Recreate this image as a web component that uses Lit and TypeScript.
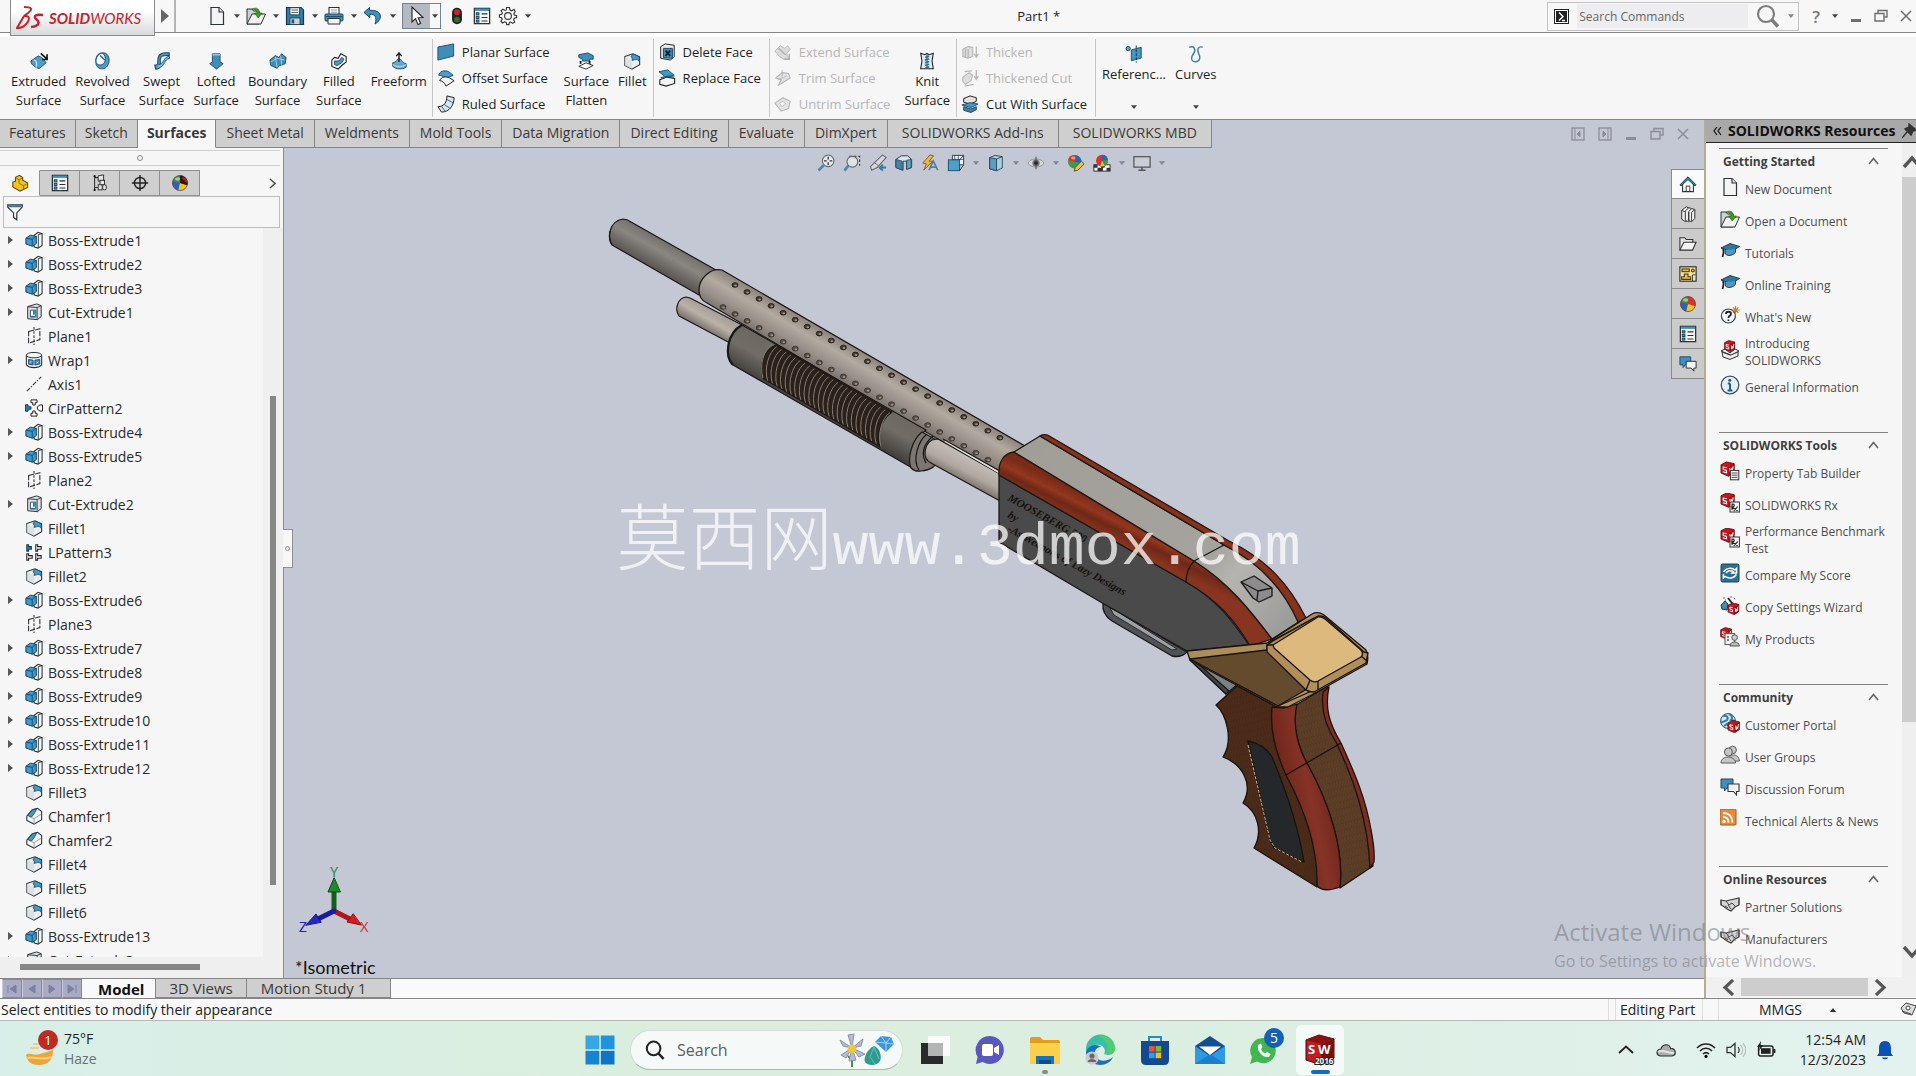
import { LitElement, html, svg, css, nothing } from "lit";
import { customElement, state } from "lit/decorators.js";
import { classMap } from "lit/directives/class-map.js";

const K = "#2b3238";
const B = "#3f8db8";

const cube = (x: number, y: number, s: number) => svg`
  <g transform="translate(${x} ${y}) scale(${s})">
    <path d="M0 2.5 L5 0 L12 1.5 L12 9.5 L7 13 L0 10 Z" fill="#c5161d" stroke="#5d0b0e" stroke-width=".8"/>
    <path d="M7 4.6 L12 1.5 V9.5 L7 13 Z" fill="#8c1115"/>
    <path d="M5.4 5.2 L2 4.6 L2 6.6 L5 7.6 L5 9.8 L1.6 8.8 M8 5.6 L8.7 10 L9.5 6.6 L10.2 8.8 L11 4" fill="none" stroke="#fff" stroke-width="1"/>
  </g>`;

const ball = svg`
  <circle cx="10" cy="10" r="8.4" fill="#d8342c"/>
  <path d="M10 10 L10 1.6 A8.4 8.4 0 0 0 1.8 8.4 Z" fill="#3c8f3e"/>
  <path d="M10 10 L1.8 8.4 A8.4 8.4 0 0 0 8 18.2 Z" fill="#2c62b8"/>
  <path d="M10 10 L8 18.2 A8.4 8.4 0 0 0 18 12.6 Z" fill="#f0c526"/>
  <circle cx="10" cy="10" r="8.4" fill="none" stroke="#4a4a4a" stroke-width=".8"/>
  <ellipse cx="7.4" cy="5.6" rx="3" ry="2" fill="#fff" opacity=".5"/>`;

const page = svg`<path d="M4 1.5 H12 L16.5 6 V18.5 H4 Z" fill="#f4f4f4" stroke="${K}" stroke-width="1.2"/><path d="M12 1.5 V6 H16.5" fill="#ddd" stroke="${K}" stroke-width="1.1"/>`;
const openDoc = svg`<path d="M1 3 H6 L7.5 5 H13 V18 H1 Z" fill="#cfd2d2" stroke="${K}"/><path d="M1 18 L6 8 H19.5 L15 18 Z" fill="#f1f1f1" stroke="${K}"/><path d="M6 3 C10 1 13.5 2.5 13.4 7 H16.3 L12.2 12 L8.6 7 H11 C10.8 4.6 9 3.6 6 3 Z" fill="#3f9a1f" stroke="#1f5c10" stroke-width=".6"/>`;
const cap = svg`<path d="M1 7 L10 2.5 L19.5 5.5 L11.5 10.5 Z" fill="#2f77a3" stroke="#1d3f57"/><path d="M5 9 L5.4 13 C8 15.4 12 15 15.5 11.4 L15.4 8" fill="#4d97c2" stroke="#1d3f57"/><path d="M3 8 C4.5 11 3 13 2.5 16" fill="none" stroke="#222" stroke-width="1.8"/>`;
const list = svg`<rect x="1.5" y="1.5" width="17" height="17" fill="#f6f6f6" stroke="${K}" stroke-width="1.4"/><path d="M2 3 H18" stroke="${B}" stroke-width="2.6"/><g fill="#4f9ac4" stroke="#173d57"><rect x="3.6" y="6.4" width="3" height="2.4"/><rect x="3.6" y="10.4" width="3" height="2.4"/><rect x="3.6" y="14.4" width="3" height="2.4"/></g><path d="M9.5 7.6 H16 M9.5 11.6 H16 M9.5 15.6 H16" stroke="${K}" stroke-width="1.2"/>`;
const chat = svg`<path d="M1 2 H13 V11 H7 L4.5 14 V11 H1 Z" fill="#3e8fc0" stroke="#1d4968"/><path d="M8 7 H19 V14.5 H16.5 V18 L13.5 14.5 H8 Z" fill="#f3f3f3" stroke="#333" stroke-width="1.1"/>`;
const shake = svg`<path d="M1 5 L6 6 L10 5 L19 3 V10 L15 12 L11 16 L7 14 L3 11 L1 10 Z" fill="#d4d4d4" stroke="#3b3b3b" stroke-width="1.1"/><path d="M6 6 L9 10 L12 8 L16 12 M5 11 L8 13 M8 10 L11 14 M1 5 V10 M19 3 V10" fill="none" stroke="#444"/>`;
const fillet = svg`<path d="M2 5 L11 2 L18.5 5.5 V14 L10 19 L2 15 Z" fill="#eceded" stroke="${K}" stroke-width="1.2"/><path d="M2 5 L10 9.4 V19 L2 15 Z" fill="#d9dbdc" opacity=".7"/><path d="M9 5.4 C9.4 3.6 11 2.6 12.5 2.6 L18.2 5.4 V10.6 C16.5 7.6 14 8 10.2 9.4 C10.6 7.6 10 6.2 9 5.4 Z" fill="#3f9cc8" stroke="#1b4a66"/>`;

const ICONS: Record<string, unknown> = {
  page, openDoc, cap, list, chat, shake, fillet, ball,
  save: svg`<path d="M1.5 1.5 H16 L18.5 4 V18.5 H1.5 Z" fill="#2f7da8" stroke="#17394d" stroke-width="1.2"/><rect x="5" y="1.8" width="9.5" height="7" fill="#fff" stroke="#17394d" stroke-width=".8"/><path d="M6.5 4 H13 M6.5 6.4 H13" stroke="#555"/><rect x="5" y="12" width="10" height="6.4" fill="#c9d2d8" stroke="#17394d" stroke-width=".8"/><rect x="6.6" y="13.4" width="2.6" height="4" fill="#23556f"/>`,
  print: svg`<path d="M5 8 V1.5 H15 V8" fill="#fff" stroke="${K}" stroke-width="1.1"/><path d="M7 4 H13 M7 6.2 H13" stroke="#999"/><rect x="1" y="8" width="18" height="7" rx="1" fill="#3f93bf" stroke="#1c4660"/><path d="M4 12.5 H16 V18 H4 Z" fill="#f5f5f5" stroke="${K}"/><path d="M1.5 10.6 H18.5" stroke="#1c4660"/>`,
  undo: svg`<path d="M6.5 1.5 L1 6.5 L6.8 11.5 V8.4 C11.5 7.6 14.5 10.5 12 18 C20.6 13 19 3.4 6.6 4.4 Z" fill="#3c90bd" stroke="#1c4660"/>`,
  cursor: svg`<path d="M5 1 L5 16 L8.6 12.6 L11 18.6 L13.6 17.5 L11.2 11.8 L16 11.6 Z" fill="#fdfdfd" stroke="#222" stroke-width="1.1"/>`,
  light: svg`<rect x="4.5" y=".8" width="11" height="18.4" rx="5.5" fill="#23211f"/><circle cx="10" cy="5.8" r="3.3" fill="#c3272b"/><circle cx="10" cy="14" r="3.3" fill="#2f6e2f"/>`,
  gear: svg`<path d="M8.6 1.5 H11.4 L12 4 L13.8 4.8 L16 3.4 L17.2 5.8 L15.8 7.8 L16.3 9 L18.6 9.6 V11.6 L16.3 12.2 L15.6 13.8 L16.8 16 L14.8 17.4 L12.8 16 L11.4 16.5 L11 18.6 H8.8 L8.2 16.4 L6.6 15.8 L4.6 17 L2.9 15.2 L4.2 13.2 L3.6 11.8 L1.4 11.2 V9 L3.7 8.4 L4.4 6.8 L3 4.8 L4.9 3.2 L7 4.4 L8.2 3.9 Z" fill="#f7f7f7" stroke="#333" stroke-width="1.1"/><circle cx="10" cy="10" r="3.4" fill="none" stroke="#333" stroke-width="1.1"/>`,
  extrude: svg`<path d="M1 10 L9 4.5 L13 6 L18 12 L10 18.5 L6.5 17 L1.5 13 Z" fill="#4d9fca" stroke="#1b4a66"/><path d="M4 9 C7 9 8 12 7 17" fill="none" stroke="#bfe0f0" stroke-width="1.6"/><path d="M12 1.5 L19 8 M19 2.5 V8.4 H13.5" stroke="#111" stroke-width="1.8" fill="none"/>`,
  revolve: svg`<path d="M10 1 C16 0 19 6 17.6 12 C16 17.6 12 19.6 8 18.4 C4 17 3 14 3.4 12 C6 16 12 15 13.4 10 C14.4 6 13 2.6 10 1 Z" fill="#4b9cc8" stroke="#1b4a66"/><path d="M10 1 C4 2 2.4 8 3.4 12 M8 4 L13 9" fill="none" stroke="#27607f" stroke-width="1.5"/>`,
  sweep: svg`<path d="M3 19 C10 19 8 12 8 9 C8 3 13 4 18 4 V1 C10 0 6 2 5.5 8 C5 12 6 15 2 14.5 Z" fill="#4b9cc8" stroke="#1b4a66" stroke-width="1.2"/><path d="M6 14 C12 14 12 5 18 4.6 L18.4 7 C12 8 14 16 5 18.6" fill="#78b9da" stroke="#1b4a66"/>`,
  loft: svg`<path d="M6 2 H14.5 V11 L18 13 L10.5 19 L3 13 L6 11 Z" fill="#3f8db8" stroke="#1b4a66"/><path d="M6 2 H14.5 V4 H6 Z" fill="#8cc3de"/>`,
  boundary: svg`<path d="M1 9 L7 4 L11 6 L14 2 L19 6 L18 13 L12 15 L9 18 L2 15 Z" fill="#3f8db8" stroke="#1b4a66"/><path d="M2 11 L9 7 L17 9 M7 5 L9 17 M13 4 L14 14" stroke="#a9d3e8" fill="none"/>`,
  filled: svg`<path d="M2 9 L5 6 L9 7 L12 2 L18 5 V11 L13 15 L9 19 L2 16 Z" fill="#f4f4f4" stroke="#222" stroke-width="1.2"/><path d="M5 10 L10 10 L13 6 L15.5 8 L13 12 L8 15 L5 14 Z" fill="#4b9cc8" stroke="#1b4a66"/>`,
  freeform: svg`<path d="M3 12 C7 12 8 7 10 7 C12 7 13 12 18 13 V17 C12 20 7 19 3 16 Z" fill="#62aad0" stroke="#1b4a66"/><path d="M3 14 C8 17.5 13 17 18 14" stroke="#d7ecf6" fill="none"/><path d="M10 11 V2 M7 4.6 L10 1 L13 4.6" stroke="#222" fill="none" stroke-width="1.6"/>`,
  planar: svg`<path d="M1 4.5 L18.5 1 V14.5 L1 19 Z" fill="#3f8db8" stroke="#1b4a66"/>`,
  offset: svg`<path d="M2 7 C3 2 8 1 13 3 L18 7 L8 11 C7 8 5 7 2 7 Z" fill="#4b9cc8" stroke="#1b4a66"/><path d="M3 13 C5 8 10 8 14 10 L19 13 L10 19 C8 15 6 13 3 13 Z" fill="#f2f2f2" stroke="#222" stroke-width="1.1"/>`,
  ruled: svg`<path d="M1 13 C8 13 11 8 11 1 L19 3 C19 11 14 19 5 19 Z" fill="#d9e6ed" stroke="#222" stroke-width="1.1"/><path d="M11 5 L18.6 9 M8 10.6 L15 15 M5 12.5 L9 18" stroke="#27607f"/>`,
  flatten: svg`<path d="M2 3 L12 1 L18 4 V8 L14 8 V10 H6 V8 L2 6 Z" fill="#3f8db8" stroke="#1b4a66"/><path d="M4 10 V13 M14 10 V13" stroke="#111" stroke-width="2"/><path d="M2 16 L10 12 L18 15 L10 19 Z" fill="#fff" stroke="#222"/>`,
  delFace: svg`<path d="M3 4 L8 1 L18 2.5 V15 L14 19 L3 17 Z" fill="#e9ebec" stroke="#222" stroke-width="1.1"/><path d="M6 6 L16 6 V17 L6 16.4 Z" fill="#3f8db8" stroke="#173d57"/><path d="M8.4 8.4 L13.6 14.4 M13.6 8.4 L8.4 14.4" stroke="#0b1e2a" stroke-width="2"/>`,
  repFace: svg`<path d="M1 3 L11 1 L18 7 L8 8.6 Z" fill="#3f9ac6" stroke="#1b4a66"/><path d="M2 12 L10 9 L18.5 10.5 V16 L9 19 L2 17 Z" fill="#f4f4f4" stroke="#222" stroke-width="1.2"/><path d="M3 10 L10 8 L18 9" stroke="#27607f" fill="none" stroke-width="1.6"/>`,
  extSurf: svg`<path d="M1 9 L7 3 L12 6 L15 3 L18 7 L14 12 L17 18 H11 L6 15 Z" fill="#dcdcdc" stroke="#b6b6b6"/><path d="M5 6 L13 13 M17 12 V18 H11" stroke="#b0b0b0" stroke-width="1.6" fill="none"/>`,
  trimSurf: svg`<path d="M2 10 L9 4 L16 5 L18 10 L10 15 L5 18 L8 12 Z" fill="#e2e2e2" stroke="#b4b4b4" stroke-width="1.2"/><path d="M9 1 V8 M4 12 L14 8" stroke="#b4b4b4"/>`,
  untrim: svg`<path d="M1 9 L10 3 L18 7 L16 15 L8 18 Z" fill="#e4e4e4" stroke="#b6b6b6" stroke-width="1.2"/><path d="M6 9 L10 7 L13 10 L9 13 Z" fill="#f5f5f5" stroke="#bbb"/>`,
  knit: svg`<path d="M3 1.5 L7.6 3 L10 1.5 L12.4 3 L17 1.5 L15.6 10 L17 18.6 H3 L4.4 10 Z" fill="#dfeaf1" stroke="#222" stroke-width="1.2"/><path d="M10 2 V18" stroke="#173d57"/><path d="M8 6 L12.4 4.6 M7.6 9 L12.4 7.6 M7.6 12 L12.4 10.6 M7.6 15 L12.4 13.6 M8 18 L12.4 16.4" stroke="#2b6f97" stroke-width="1.8"/>`,
  thicken: svg`<path d="M2 7 L8 4 L13 5 V15 L8 17 L2 15 Z" fill="#ddd" stroke="#b6b6b6" stroke-width="1.2"/><path d="M5 6 V16 M8 7 V17 M17 4 V15 M14.6 12 L17 15.6 L19.4 12" stroke="#b6b6b6" fill="none" stroke-width="1.4"/>`,
  thickCut: svg`<path d="M2 9 L9 4 L13 7 L11 13 L5 17 L2 14 Z" fill="#ddd" stroke="#b6b6b6" stroke-width="1.2"/><path d="M4 3 L12 2 M17 1 V11 M14.6 8 L17 11.6 L19.4 8 M4 19 L14 17" stroke="#b6b6b6" fill="none" stroke-width="1.4"/>`,
  cutWith: svg`<path d="M3 4 L10 1 L17 3 V7 L10 10 L3 8 Z" fill="#e9e2d5" stroke="#222" stroke-width="1.1"/><path d="M1 11 L10 8.5 L19 10 L11 14 Z" fill="#3f9ac6" stroke="#1b4a66"/><path d="M3 13 L11 15.6 L17 13 V16.4 L11 19.4 L3 17 Z" fill="#3b86ae" stroke="#153b52"/>`,
  refGeo: svg`<circle cx="3.5" cy="4" r="2.4" fill="#58a6cf" stroke="#1b3b4f"/><path d="M7 5.5 L18 2.5 V14.5 L7 17.5 Z" fill="#4696c2" stroke="#1b4a66"/><path d="M12.5 .5 V19.5" stroke="#102a3a" stroke-dasharray="3 1.4"/>`,
  curves: svg`<path d="M2.5 2.5 C9 .5 10 6 7 10 C3 16 6 19 10 18.6 C15 18 15 13 13 9.6 C11 5 12 1 17.5 2.4" fill="none" stroke="#3a7fa8" stroke-width="1.6"/>`,
  boss: svg`<path d="M10 5 L14.5 1.5 L19 3 V16 L14.5 19 L10 17.5 Z" fill="#f6f6f6" stroke="${K}" stroke-width="1.2"/><path d="M14.8 4 L19 3 M14.8 4 V18.6" stroke="${K}"/><path d="M1 8 L6 4.6 L12.6 6 V14 L8 17 L1 14.4 Z" fill="#3d9cc9" stroke="#174560" stroke-width="1.1"/><path d="M1 8 L8 9.2 L12.6 6 M8 9.2 V17" fill="none" stroke="#174560"/>`,
  cut: svg`<path d="M3 4 L13 1 L18 3 V15 L14 18.5 L3 17.5 Z" fill="#dfe1e2" stroke="${K}" stroke-width="1.1"/><path d="M3 4.2 L13.5 5 V18.4 M13.5 5 L18 3" fill="none" stroke="${K}"/><path d="M6 8 L12 8 V15.5 H6 Z" fill="#fff" stroke="#1b4a66"/><rect x="8.8" y="8.4" width="3" height="4.6" fill="#2f86b2"/><path d="M6 15 H12" stroke="#2f6f97" stroke-width="1.6"/>`,
  plane: svg`<path d="M4 5 L16.5 2 V14 L4 18 Z" fill="none" stroke="${K}" stroke-width="1.2" stroke-dasharray="6 1.6"/><path d="M10 0 V20" stroke="${K}" stroke-dasharray="3 1.6" stroke-width="1.2"/>`,
  wrap: svg`<path d="M1.5 5 V15.5 C5 19.5 15 19.5 18.5 15.5 V5" fill="#eef1f3" stroke="${K}" stroke-width="1.2"/><ellipse cx="10" cy="4.6" rx="8.5" ry="3" fill="#fafafa" stroke="${K}" stroke-width="1.1"/><path d="M4 9.4 L9 10.2 V15.6 L4 14.6 Z M11 10.2 L16.4 9.4 V14.4 L11 15.6 Z" fill="#3f8db8" stroke="#1a4a72"/><path d="M5 13 L7 11.6 M12.6 13.4 L15 12" stroke="#fff"/>`,
  axis: svg`<path d="M2 18 L18 2" stroke="${K}" stroke-width="1.2" stroke-dasharray="5 1.5 1.5 1.5"/>`,
  cir: svg`<g fill="#fafafa" stroke="#222" stroke-width="1.1"><path d="M6.6 1 H13.4 V4 H11.4 V6.6 H8.6 V4 H6.6 Z"/><path d="M6.6 19 H13.4 V16 H11.4 V13.4 H8.6 V16 H6.6 Z"/><path d="M19.4 6.6 V13.4 H16.8 L13.8 11.4 V8.6 L16.8 6.6 Z"/></g><path d="M.6 6.4 H3.4 V8.6 H6.6 V11.4 H3.4 V13.6 H.6 Z" fill="#2f86b2" stroke="#143b52" stroke-width="1.1"/>`,
  lpat: svg`<path d="M2 2 H4 V4 H7 V7 H4 V9 H2 Z" fill="#2f86b2" stroke="#143b52" stroke-width="1.2"/><g fill="#fafafa" stroke="#222" stroke-width="1.2"><path d="M12 2 H14 V4 H18 V7 H14 V9 H12 Z"/><path d="M2 12 H4 V14 H8 V17 H4 V19 H2 Z"/><path d="M12 12 H14 V14 H18 V17 H14 V19 H12 Z"/></g>`,
  chamfer: svg`<path d="M2 10 L8 3 L14 1.5 L18.5 5 V14 L10 19 L2 15 Z" fill="#f3f4f4" stroke="${K}" stroke-width="1.2"/><path d="M3 9.4 L8.6 3 L13 2 L10.4 7 L7 11.4 Z" fill="#4398c4" stroke="#1b4a66"/><path d="M7 11.4 L10 13 V19 M10 13 L18 8" fill="none" stroke="#999"/>`,
  part: svg`<path d="M2 9 L2 14.5 L10 19 L18.5 15 V10 L13 7 V4 L9.4 1.4 L5 3.6 V8 Z" fill="#f3c320" stroke="#5d4708" stroke-width="1.2"/><path d="M5 4 L9 6.4 V10.4 L14 13 L18.5 10.4 M14 13 V17 M9 6.4 L13 4.4" fill="none" stroke="#8b6a0d"/>`,
  config: svg`<path d="M4 2 V18 M4 4 H8 M4 15 H8" stroke="#333" stroke-width="1.2" fill="none"/><g fill="#e8e8e8" stroke="#333" stroke-width="1.1"><path d="M8 2 L14 1 V7 L8 8 Z"/><rect x="10" y="7" width="5" height="5"/><rect x="8" y="12" width="4.4" height="5.6"/><rect x="13" y="12" width="4" height="5.6" rx="1.6"/></g><circle cx="4" cy="2.4" r="1.2"/><circle cx="4" cy="17.8" r="1.2"/>`,
  target: svg`<circle cx="10" cy="10" r="6.2" fill="none" stroke="#222" stroke-width="1.6"/><path d="M10 1 V19 M1 10 H19" stroke="#222" stroke-width="1.6"/>`,
  ballDark: svg`${ball}<path d="M10 10 L10 1.6 A8.4 8.4 0 0 1 18 12.6 Z" fill="#251c1a"/><path d="M13 4 L18 9" stroke="#a9291f" stroke-width="2.4"/>`,
  funnel: svg`<path d="M2 2 H18 V4.6 L12 11 V18.6 L8.4 16 V11 L2 4.6 Z" fill="#f6f6f6" stroke="${K}" stroke-width="1.3"/><path d="M2 2.6 H18 L17 4.6 H3 Z" fill="#2f7da8"/>`,
  fit: svg`<circle cx="12.4" cy="7.6" r="6.4" fill="#e4eaee" stroke="#666" stroke-width="1.2"/><path d="M7.6 12.4 L1.6 18.4" stroke="#4f88a8" stroke-width="3"/><path d="M12.4 3 V6 M12.4 9.2 V12.2 M7.8 7.6 H10.8 M14 7.6 H17" stroke="#333" stroke-width="1.5"/>`,
  area: svg`<path d="M7 2.5 H18.5 V13" fill="none" stroke="#333" stroke-dasharray="3 2" stroke-width="1.2"/><circle cx="10.4" cy="8.6" r="6" fill="#dce3e8" stroke="#666" stroke-width="1.2"/><path d="M6 13 L1.6 18.4" stroke="#4f88a8" stroke-width="3"/>`,
  prev: svg`<path d="M15 1 L19 4 L9 15 L3 18 L1.6 14 Z" fill="#d6dadd" stroke="#666" stroke-width="1.2"/><path d="M6 9.6 L11 13.4" stroke="#666"/><path d="M19 15 H13 M15.4 12 L12 15.2 L15.4 18.4" stroke="#2f7da8" fill="none" stroke-width="2.2"/>`,
  section: svg`<path d="M1 6 L7 2 L14 2 L18.5 6 V15 L13 17 V8 L9 8 V18 L1 15 Z" fill="#d9e4ea" stroke="${K}"/><path d="M1 6 L8 8 V18 L1 15 Z" fill="#3f86ad" stroke="#2b4a5e"/><path d="M13 7 L18 6 V15 L13 17 Z" fill="#5aa6cd" stroke="#2b4a5e"/>`,
  dims: svg`<path d="M2 10 L10 1 L14 2 L9 8 L13 8 L3 18 L6 11 Z" fill="#efb64a" stroke="#7a5a1c"/><path d="M9 18 L13.6 7.6 L18.6 18 M11 14.6 H17" stroke="#4f7fa6" fill="none" stroke-width="1.8"/>`,
  cubeView: svg`<path d="M6 1.5 H18.5 V12 H6 Z" fill="#eef2f5" stroke="${K}"/><path d="M8.6 1.5 V12 M12.6 1.5 V12 M6 6 H18.5" stroke="${K}" stroke-width=".8"/><rect x="1.5" y="6.5" width="12.5" height="12" fill="#4c9fc9" stroke="#1a4a66"/><path d="M14 6.5 L18.5 1.5 M14 18.5 L18.5 12" stroke="${K}"/>`,
  display: svg`<path d="M3 4 L9 1.5 L17 3 V15.5 L10.6 18.6 L3 16.4 Z" fill="#a8cfe2" stroke="#2b4250"/><path d="M3 4 L10.6 5.6 V18.6 L3 16.4 Z" fill="#5a9fc3" stroke="#2b4250"/><path d="M10.6 5.6 L17 3" stroke="#2b4250"/>`,
  eye: svg`<path d="M1 10 C5 4 15 4 19 10 C15 16 5 16 1 10 Z" fill="#d5d8dc" stroke="#8b9096"/><circle cx="10" cy="10" r="4" fill="#6b6f74"/><circle cx="10" cy="10" r="2" fill="#111"/><path d="M10 3 V17" stroke="#444"/>`,
  editApp: svg`<circle cx="8.6" cy="8.6" r="7.6" fill="#3d9b48"/><path d="M8.6 8.6 V1 A7.6 7.6 0 0 1 16 10 Z" fill="#2c62b8"/><path d="M8.6 8.6 L1.2 7 A7.6 7.6 0 0 1 8.6 1 Z" fill="#d8342c"/><ellipse cx="7" cy="4.4" rx="2.6" ry="1.8" fill="#fff" opacity=".45"/><path d="M8 19 L9 15 L16 8 L19 11 L12 18 Z" fill="#efc04a" stroke="#5d4708"/>`,
  scene: svg`<rect x="1" y="12" width="18" height="7" fill="#fff" stroke="#222"/><path d="M1 12 H5 V15.4 H9 V12 H13 V15.4 H19 V19 H15 V15.4 H11 V19 H5 V15.4 H1 Z" fill="#333"/><circle cx="10" cy="7.4" r="6.6" fill="#d8342c"/><path d="M10 7.4 L16.4 6 A6.6 6.6 0 0 1 8 13.7 Z" fill="#3d9b48"/><path d="M10 7.4 V.8 A6.6 6.6 0 0 1 16.5 6.4 Z" fill="#2c62b8"/><path d="M10 7.4 L13 13 L8 13.8 Z" fill="#f0c526"/>`,
  monitor: svg`<rect x="1" y="3" width="18" height="11.6" fill="#c9ced6" stroke="#555" stroke-width="1.4"/><path d="M10 15 V18 M6 18 H14" stroke="#555" stroke-width="1.8"/>`,
  home: svg`<path d="M4 10 V18.5 H16 V10" fill="#fafafa" stroke="#333" stroke-width="1.2"/><path d="M1 11 L10 2 L19 11 L17.6 12 L10 5 L2.4 12 Z" fill="#2e8dab" stroke="#14343f"/><rect x="8" y="12.4" width="4" height="6" fill="none" stroke="#333"/>`,
  books: svg`<g fill="#efefef" stroke="#333" stroke-width="1.1"><path d="M3 6 L8 2 L10.4 3 V16 L7 18.6 L3 15.6 Z"/><path d="M7 6.6 L11 3 L14 4 V15.6 L10.6 18.6 L7 17 Z"/><path d="M11 7 L14 4 L17.6 5 V15 L14 18.6 L11 17.4 Z"/></g><path d="M14 8 V18 M14 8 L17.6 5 M10.6 8 V18 M3 6 L6.6 7.4" stroke="#333"/>`,
  folder: svg`<path d="M1 16.5 V3 H6.4 L8 5 H15.4 V8" fill="#e4e4e4" stroke="#333" stroke-width="1.2"/><path d="M1 16.8 L5.4 8 H19 L15 16.8 Z" fill="#f3f3f3" stroke="#333" stroke-width="1.2"/>`,
  palette: svg`<rect x="1" y="2" width="18" height="16" fill="#f3e2ac" stroke="#222" stroke-width="1.2"/><g fill="#f6c437" stroke="#4a3907" stroke-width="1.2"><rect x="3.4" y="4.4" width="8" height="3"/><path d="M6 10 H10 V13 H13 V16 H3 V13 H6 Z"/><circle cx="15.4" cy="6" r="1.6"/></g><path d="M15 18 V11 H19" fill="#e4e4ea" stroke="#333"/>`,
  whatsNew: svg`<circle cx="8.4" cy="11" r="7" fill="#f4f4f4" stroke="#345" stroke-width="1.2"/><path d="M6 9 C6 6 11 6 11 9 C11 11 8.4 10.6 8.4 13 M8.4 14.6 V16" stroke="#222" stroke-width="1.8" fill="none"/><path d="M15.6 1 V9 M11.6 5 H19.6 M13 2.4 L18.4 7.8 M18.4 2.4 L13 7.8" stroke="#c87a22" stroke-width="1.1"/>`,
  intro: svg`<path d="M2 12 L10 15 L18 12 V16 L10 19.4 L3 17 Z" fill="#eee" stroke="#333"/><path d="M1 11 L5 9 L10 13 L15 9 L19 11 L11 15 Z" fill="#fafafa" stroke="#333"/>${cube(4.4, 0.6, 0.86)}`,
  info: svg`<circle cx="10" cy="10" r="8.8" fill="#e4f0f8" stroke="#41525e" stroke-width="1.3"/><path d="M10 8.6 V15.4 M7.8 8.6 H10 M7.6 15.4 H12.4" stroke="#1f5d8c" stroke-width="2"/><circle cx="9.8" cy="5.2" r="1.5" fill="#1f5d8c"/>`,
  tab: svg`${cube(1, 1, 1.1)}<rect x="10.4" y="9.4" width="8.4" height="9.4" fill="#f1f3f5" stroke="#333"/><path d="M11.6 12 H17.6 M11.6 14.2 H17.6 M11.6 16.4 H17.6" stroke="#555"/>`,
  rx: svg`${cube(1, 0, 1.1)}<rect x="10" y="9" width="9.4" height="10" fill="#f5f5f5" stroke="#333"/><path d="M12 17 V11 C15 10.6 15 14 12 14 L17.6 17.8 M17.6 13.6 L13.8 17.8" stroke="#222" fill="none" stroke-width="1.1"/>`,
  score: svg`<rect x="1" y="1" width="18" height="18" rx="1.6" fill="#2d6f98" stroke="#1a4661"/><path d="M3.6 9 C6 4.6 12 4.4 15 7 L16.6 5.4 V10 H12 L13.4 8.6 C11 7 7.6 7.6 6 10 M16.4 11.4 C14 16 8 15.6 5 13.4 L3.4 14.8 V11" fill="none" stroke="#fff" stroke-width="1.5"/>`,
  wizard: svg`<path d="M1 10 L5 6 L8 9 L7 15 L2 14 Z" fill="#3f8db8" stroke="#1b3b4f"/><path d="M8 3 L15 12" stroke="#222" stroke-width="1.8"/><path d="M4 2 V4 M11 1 V3 M14 2.6 L15 4.4 M6 4.6 L4.6 5.8" stroke="#666"/>${cube(8, 8, 0.9)}`,
  products: svg`${cube(0.6, 0.6, 0.9)}<rect x="5" y="6.6" width="9.6" height="11" fill="#f2f2ee" stroke="#555"/><path d="M7 10 H9 M7 13 H9" stroke="#555" stroke-width="1.4"/><circle cx="14.6" cy="10.6" r="2.8" fill="#c9d2c5" stroke="#555"/><path d="M10 19 C10 13.6 19 13.6 19.4 19 Z" fill="#b6c2b1" stroke="#555"/>`,
  portal: svg`<circle cx="8" cy="8" r="7.4" fill="#d7e7f0" stroke="#2b4a66"/><path d="M3 3 C6 2 9 4 7 7 C5 9 2 8 1 10 M9 1 C12 2 13 5 11 7 L15 8 M4 13 L7 11 L9 14" fill="none" stroke="#2e7eac" stroke-width="2"/>${cube(8, 7.4, 0.95)}`,
  users: svg`<g fill="#c6c6c6" stroke="#5b5b5b"><circle cx="12.6" cy="5" r="3.8"/><path d="M8 16 C8 8 19 8 19.4 16 Z"/><circle cx="8.4" cy="7" r="4"/><path d="M1 18 C1 10 15 10 15.6 18 Z"/></g>`,
  rss: svg`<rect x="0" y="0" width="16" height="16" rx="1" fill="#e58a36" stroke="#a85c18"/><circle cx="4" cy="12.4" r="1.7" fill="#fff"/><path d="M3 8 C7 8 8.4 10 8.4 13.4 M3 4 C9 4 12.4 8 12.4 13.4" fill="none" stroke="#fff" stroke-width="1.9"/>`,
};

const ic = (name: string, cls = "") => html`<svg class="ic ${cls}" viewBox="0 0 20 20" aria-hidden="true">${ICONS[name]}</svg>`;
const drop = (cls = "") => html`<svg class="drop ${cls}" viewBox="0 0 8 5" aria-hidden="true"><path d="M0 0 H8 L4 5 Z"/></svg>`;

type Big = [string, string, string?];
type Small = [string, string, boolean?];

const BIG_1: Big[] = [
  ["extrude", "Extruded", "Surface"], ["revolve", "Revolved", "Surface"], ["sweep", "Swept", "Surface"],
  ["loft", "Lofted", "Surface"], ["boundary", "Boundary", "Surface"], ["filled", "Filled", "Surface"], ["freeform", "Freeform"],
];
const RIBBON_TABS = ["Features", "Sketch", "Surfaces", "Sheet Metal", "Weldments", "Mold Tools", "Data Migration", "Direct Editing", "Evaluate", "DimXpert", "SOLIDWORKS Add-Ins", "SOLIDWORKS MBD"];

const TREE: [string, string][] = [
  ["boss", "Boss-Extrude1"], ["boss", "Boss-Extrude2"], ["boss", "Boss-Extrude3"], ["cut", "Cut-Extrude1"],
  ["plane", "Plane1"], ["wrap", "Wrap1"], ["axis", "Axis1"], ["cir", "CirPattern2"], ["boss", "Boss-Extrude4"],
  ["boss", "Boss-Extrude5"], ["plane", "Plane2"], ["cut", "Cut-Extrude2"], ["fillet", "Fillet1"], ["lpat", "LPattern3"],
  ["fillet", "Fillet2"], ["boss", "Boss-Extrude6"], ["plane", "Plane3"], ["boss", "Boss-Extrude7"], ["boss", "Boss-Extrude8"],
  ["boss", "Boss-Extrude9"], ["boss", "Boss-Extrude10"], ["boss", "Boss-Extrude11"], ["boss", "Boss-Extrude12"],
  ["fillet", "Fillet3"], ["chamfer", "Chamfer1"], ["chamfer", "Chamfer2"], ["fillet", "Fillet4"], ["fillet", "Fillet5"],
  ["fillet", "Fillet6"], ["boss", "Boss-Extrude13"], ["cut", "Cut-Extrude3"],
];

const SECTIONS: { title: string; items: [string, string][] }[] = [
  { title: "Getting Started", items: [["page", "New Document"], ["openDoc", "Open a Document"], ["cap", "Tutorials"], ["cap", "Online Training"], ["whatsNew", "What's New"], ["intro", "Introducing SOLIDWORKS"], ["info", "General Information"]] },
  { title: "SOLIDWORKS Tools", items: [["tab", "Property Tab Builder"], ["rx", "SOLIDWORKS Rx"], ["rx", "Performance Benchmark Test"], ["score", "Compare My Score"], ["wizard", "Copy Settings Wizard"], ["products", "My Products"]] },
  { title: "Community", items: [["portal", "Customer Portal"], ["users", "User Groups"], ["chat", "Discussion Forum"], ["rss", "Technical Alerts & News"]] },
  { title: "Online Resources", items: [["shake", "Partner Solutions"], ["shake", "Manufacturers"]] },
];

const holes = (x: number, y: number, o: number) =>
  Array.from({ length: 23 }, (_, i) => {
    const cx = x + i * 12.04, cy = y + i * 6.94;
    return svg`<ellipse cx=${cx} cy=${cy} rx="3" ry="2.3" fill="#4b3f36" stroke="#1e1814" stroke-width=".9" opacity=${o}/><ellipse cx=${cx + 0.6} cy=${cy + 0.5} rx="1.3" ry="1" fill="#a4937f"/>`;
  });
const ribs = Array.from({ length: 26 }, (_, i) => {
  const x = 772 + i * 4.72, y = 344 + i * 2.74;
  return svg`<path d="M${x} ${y} C${x - 8} ${y + 5} ${x - 13} ${y + 22} ${x - 9} ${y + 34}" fill="none" stroke="#857b6f" stroke-width="1"/>`;
});

const model = svg`
  <defs>
    <linearGradient id="barrel" gradientUnits="userSpaceOnUse" x1="670" y1="240" x2="652" y2="272"><stop offset="0" stop-color="#6d6a66"/><stop offset=".4" stop-color="#8a8681"/><stop offset="1" stop-color="#4f4c49"/></linearGradient>
    <linearGradient id="shroud" gradientUnits="userSpaceOnUse" x1="860" y1="350" x2="838" y2="388"><stop offset="0" stop-color="#8b837b"/><stop offset=".3" stop-color="#b3aaa1"/><stop offset=".6" stop-color="#989089"/><stop offset="1" stop-color="#67615c"/></linearGradient>
    <linearGradient id="tube" gradientUnits="userSpaceOnUse" x1="712" y1="309" x2="700" y2="330"><stop offset="0" stop-color="#a69e96"/><stop offset=".45" stop-color="#bab2a9"/><stop offset="1" stop-color="#6c6661"/></linearGradient>
    <linearGradient id="tube2" gradientUnits="userSpaceOnUse" x1="968" y1="458" x2="956" y2="481"><stop offset="0" stop-color="#c2bbb3"/><stop offset=".5" stop-color="#b0a8a0"/><stop offset="1" stop-color="#6e6862"/></linearGradient>
    <linearGradient id="fore" gradientUnits="userSpaceOnUse" x1="840" y1="382" x2="820" y2="418"><stop offset="0" stop-color="#6d6862"/><stop offset=".4" stop-color="#716c66"/><stop offset="1" stop-color="#3d3a37"/></linearGradient>
    <linearGradient id="red" gradientUnits="userSpaceOnUse" x1="1110" y1="508" x2="1098" y2="532"><stop offset="0" stop-color="#7a2b18"/><stop offset=".35" stop-color="#93371f"/><stop offset=".6" stop-color="#6f2817"/><stop offset="1" stop-color="#873420"/></linearGradient>
    <linearGradient id="topface" gradientUnits="userSpaceOnUse" x1="1040" y1="440" x2="1290" y2="625"><stop offset="0" stop-color="#a09e97"/><stop offset=".66" stop-color="#a5a39d"/><stop offset=".76" stop-color="#b5b4b0"/><stop offset="1" stop-color="#9b9b99"/></linearGradient>
    <linearGradient id="gripred" gradientUnits="userSpaceOnUse" x1="1280" y1="800" x2="1330" y2="790"><stop offset="0" stop-color="#6c2318"/><stop offset=".6" stop-color="#873327"/><stop offset="1" stop-color="#70281c"/></linearGradient>
    <linearGradient id="gold" x1="0" y1="0" x2="1" y2="1"><stop offset="0" stop-color="#a98d5c"/><stop offset="1" stop-color="#b3935c"/></linearGradient>
    <pattern id="wood" width="3" height="7" patternUnits="userSpaceOnUse" patternTransform="rotate(-14)"><rect width="3" height="7" fill="#4d2c1a"/><path d="M1 0 V4 M2.4 3 V7" stroke="#432412" stroke-width=".8"/></pattern>
    <pattern id="wood2" width="3" height="7" patternUnits="userSpaceOnUse" patternTransform="rotate(-14)"><rect width="3" height="7" fill="#5e3f29"/><path d="M1 0 V4 M2.4 3 V7" stroke="#53351e" stroke-width=".8"/></pattern>
  </defs>
  <g stroke="#1b1714" stroke-width="1.2" stroke-linejoin="round">
    <path d="M612 245 C607 238 609 221 623 219 Q627 219 631 222 L716 270 L699 295 Z" fill="url(#barrel)"/>
    <path d="M612 245 C609 240 609 236 610 231" fill="none"/>
    <path d="M679 316 C674 309 678 298 686 297 L690 298 L744 326 L730 343 Z" fill="url(#tube)"/>
    <path d="M707 303 C696 298 697 283 706 275 Q713 268 722 270 L1025 446 L999 475 Z" fill="url(#shroud)"/>
    <path d="M733 365 C724 356 727 333 742 325 L926 430 C918 436 910 456 914 469 Z" fill="url(#fore)"/>
    <path d="M733 365 C724 356 727 333 742 325" fill="none" stroke-width="2.2"/>
    <path d="M776 345 C763 350 758 368 764 379 L880 447 C876 436 880 420 892 412 Z" fill="#2b211b"/>
  </g>
  ${ribs}
  <g stroke="#1b1714" stroke-width="1.2" stroke-linejoin="round">
    <path d="M922 432 C912 440 907 458 911 468 Q915 472 921 471 C930 470 938 466 936 460 L940 442 Z" fill="#7b7671"/>
    <path d="M927 434 C918 441 912 460 919 470" fill="none"/>
    <path d="M933 436 C925 443 920 452 926 463" fill="none"/>
    <path d="M931 463 C921 458 925 444 932 440 L938 439 L1000 474 V501 Z" fill="url(#tube2)"/>
    <path d="M945 441 L1000 473" fill="none" stroke="#e4e2df" stroke-width="2"/>
    <path d="M943 439 L1000 471" fill="none"/>
  </g>
  ${holes(735, 285, 1)}${holes(723, 307, 0.75)}
  <g stroke="#1b1714" stroke-width="1.3" stroke-linejoin="round">
    <path d="M1103 603 C1102 612 1106 617 1112 621 L1172 656 Q1181 658 1187 652 L1180 648 Z" fill="#4d5357"/>
    <path d="M1110 608 L1118 612 L1177 649 L1172 650 L1114 615 Z" fill="#9da1a6" stroke-width=".8"/>
    <path d="M1190 660 L1226 694 L1238 684 L1200 662 Z" fill="#7b8184"/>
    <path d="M1190 660 L1194 660 L1229 691 L1226 694 Z" fill="#3f4649"/>
    <path d="M999 475 L1186 582 C1215 598 1232 620 1249 645 L1187 651 L1104 604 L999 542 Z" fill="#4a4a4a"/>
    <path d="M999 475 C998 462 1004 453 1014 452 L1194 561 C1228 582 1250 610 1272 639 L1250 646 C1236 622 1218 600 1186 582 Z" fill="url(#red)"/>
    <path d="M1014 452 L1040 436 L1224 545 C1262 564 1284 590 1300 621 L1272 639 C1250 610 1228 582 1194 561 Z" fill="url(#topface)"/>
    <path d="M1040 436 Q1045 433 1051 437 L1229 541 C1268 560 1290 586 1306 618 L1298 622 C1284 590 1262 564 1224 545 Z" fill="#86321c"/>
    <path d="M1224 545 L1194 561 Q1186 570 1186 582" fill="none"/>
    <path d="M1241 582 L1254 576 L1272 588 V596 L1259 602 L1253 598 Z" fill="#8c8c8c"/>
    <path d="M1241 582 L1258 591 L1272 588 M1258 591 L1257 600" fill="none"/>
  </g>
  <g fill="#15110f" font-family="Liberation Serif, serif" font-weight="700" font-style="italic" font-size="11">
    <text transform="translate(1007 500) rotate(29)">MOOSEBERG 500</text>
    <text transform="translate(1007 517) rotate(29)">by</text>
    <text transform="translate(1007 531) rotate(29)">-As Weapons of Lazy Designs</text>
  </g>
  <g stroke="#1b1210" stroke-width="1.3" stroke-linejoin="round">
    <path d="M1237 686 L1216 705 C1226 714 1234 740 1223 757 C1242 764 1254 784 1243 803 C1258 812 1263 832 1254 848 L1317 887 L1320 800 L1290 706 L1280 708 Z" fill="url(#wood)"/>
    <path d="M1296 705 C1292 725 1298 748 1308 765 C1330 805 1344 850 1340 888 L1373 866 C1372 830 1356 780 1340 744 C1326 722 1324 705 1328 686 Z" fill="url(#wood2)"/>
    <path d="M1272 707 C1270 728 1274 748 1286 775 C1306 812 1318 850 1317 886 Q1324 893 1340 887 C1344 850 1330 805 1308 765 C1298 748 1292 725 1297 704 L1284 708 Z" fill="url(#gripred)"/>
    <path d="M1323 692 C1321 708 1324 724 1336 742 C1354 780 1368 820 1370 868 L1374 862 Q1375 850 1371 830 C1366 800 1356 776 1341 743 C1328 722 1325 706 1329 687 Z" fill="#7e2d21"/>
    <path d="M1286 775 L1341 743" fill="none"/>
    <path d="M1248 741 Q1264 744 1272 757 C1286 790 1298 826 1304 862 L1274 848 Q1270 842 1268 832 Z" fill="#24282a"/>
    <path d="M1248 745 L1270 840 L1275 848 L1302 862" fill="none" stroke="#c9b98c" stroke-dasharray="3 1.6" stroke-width="1"/>
    <path d="M1187 651 L1267 643 L1312 614 Q1318 611 1324 615 L1366 650 Q1369 655 1367 664 L1317 692 L1288 707 L1277 707 L1190 660 Z" fill="url(#gold)"/>
    <path d="M1190 659 L1267 650 L1307 689 L1278 706 Z" fill="#654b2d"/>
    <path d="M1267 650 V644 M1278 706 L1314 690 M1268 643 L1314 618" fill="none"/>
    <path d="M1267 645 L1273 641 L1318 616 Q1323 615 1327 619 L1364 652 L1368 653 L1366 663 L1314 692 Q1307 692 1304 688 L1267 652 Z" fill="#b08f58"/>
    <path d="M1273 645 L1318 617 Q1321 616 1325 619 L1361 650 Q1364 654 1361 657 L1318 681 Q1314 683 1310 680 L1274 648 Z" fill="#deb97e"/>
    <path d="M1273 645 L1267 645 M1361 656 L1367 661 M1310 680 L1306 690 M1318 681 V690" fill="none"/>
  </g>
  <g stroke-linecap="round">
    <path d="M334 910 V890" stroke="#12601c" stroke-width="5"/><path d="M334 878 L328 892 H340 Z" fill="#1e8a2c" stroke="#0c4713"/>
    <path d="M334 911 L350 919" stroke="#b31418" stroke-width="5"/><path d="M361 925 L347 922 L353 914 Z" fill="#d61c20" stroke="#8d0f12"/>
    <path d="M334 911 L318 919" stroke="#1b1aa0" stroke-width="5"/><path d="M306 925 L316 914 L321 922 Z" fill="#2525c8" stroke="#131378"/>
  </g>
  <g font-family="Lato, sans-serif" font-size="13"><text x="330" y="877" fill="#2f8a43">Y</text><text x="360" y="932" fill="#d5343a">X</text><text x="299" y="932" fill="#2222b8">Z</text></g>
`;

@customElement("app-root")
export class AppRoot extends LitElement {
  @state() private tab = "Surfaces";

  static styles = css`
    :host { display: block; font-family: "Open Sans", "Noto Sans", sans-serif; font-size: 13px; color: #222; }
    * { box-sizing: border-box; }
    button, input, select { font: inherit; color: inherit; border: 0; background: none; padding: 0; margin: 0; border-radius: 0; }
    a { color: inherit; text-decoration: none; }
    ul { list-style: none; margin: 0; padding: 0; }
    h2, h3, p { margin: 0; }
    svg { display: block; flex: none; }
    .app { position: relative; height: 100vh; display: flex; flex-direction: column; background: #f7f7f7; overflow: hidden; white-space: nowrap; }
    .ic { width: 18px; height: 18px; }
    .ic.l { width: 20px; height: 20px; }
    .drop { width: 6px; height: 4px; fill: #444; }
    .drop.dim { fill: #83868e; }

    .title { height: 33px; flex: none; display: grid; grid-template-columns: auto 1fr auto; align-items: center; border-bottom: 1px solid #868686; background: #f7f7f7; }
    .doc { text-align: center; }
    .tl { display: flex; align-items: center; height: 32px; }
    .logo { align-self: flex-start; position: relative; z-index: 2; margin-left: 10px; width: 145px; height: 36px; border: 1px solid #8c8c8c; border-top: 0; background: linear-gradient(#fff 30%, #d9dadc); display: flex; align-items: center; gap: 5px; padding-left: 5px; color: #c8202c; font-size: 15px; }
    .logo svg { width: 28px; height: 28px; }
    .logo span { font-family: Lato, sans-serif; font-style: italic; }
    .flyout { width: 21px; height: 32px; border-right: 2px solid #b5b5b5; display: grid; place-items: center; }
    .quick { display: flex; align-items: center; margin-left: 31px; gap: 7px; }
    .quick button { display: block; }
    .quick .drop { margin-right: -1px; }
    .sel { display: flex; align-items: center; height: 26px; border: 1px solid #6f8594; }
    .quick .sel button { height: 24px; width: 27px; background: #b4bac0; display: grid; place-items: center; }
    .quick .sel .drop { margin: 0 2px; }
    .tr { display: flex; justify-content: flex-end; align-items: center; height: 32px; color: #777; }
    .find { display: flex; align-items: center; border: 1px solid #c2c2c2; height: 29px; padding: 0 4px 0 6px; gap: 8px; width: 252px; }
    .find input { flex: 1; min-width: 0; background: #ededf0; height: 24px; padding: 0 2px; font-size: 12px; outline: 0; }
    .find input::placeholder { color: #666; opacity: 1; }
    .winctl { display: flex; align-items: center; gap: 12px; padding: 0 4px 0 13px; font-size: 17px; font-weight: 600; }

    .ribbon { flex: none; height: 87px; display: flex; border-top: 4px solid #fdfdfd; border-bottom: 1px solid #868686; background: #f6f6f6; padding: 2px 0; }
    .grp { display: flex; border-right: 1px solid #c6c6c6; }
    .grp:last-child { border: 0; }
    .bigs { gap: 9px; padding: 0 5px 0 11px; }
    .big { display: flex; flex-direction: column; align-items: center; padding-top: 13px; line-height: 19px; color: #1e1e1e; }
    .big .ic { margin-bottom: 2px; }
    .big.up { padding-top: 6px; }
    .big .drop { margin-top: 21px; }
    .smalls { display: flex; flex-direction: column; padding: 0 8px 0 4px; }
    .small { display: flex; align-items: center; gap: 7px; height: 26px; color: #1e1e1e; }
    .small:disabled { color: #b5b5b5; }
    .side { display: flex; gap: 9px; padding: 0 6px; }

    .work { flex: 1; min-height: 0; display: grid; grid-template-columns: 1fr 212px; }
    .main { display: flex; flex-direction: column; min-width: 0; min-height: 0; background: #c4c8d4; }
    .tabs { display: flex; flex: none; height: 28px; }
    .tabs button { padding: 0 9px 2px; font-size: 14px; color: #3a3a3a; background: #cfcfcf; border-right: 1px solid #858585; border-bottom: 1px solid #858585; }
    .tabs button:nth-child(n + 4) { padding: 0 10px 2px; }
    .tabs button.wide { padding: 0 14px 2px; }
    .tabs button.on { background: #f7f7f7; border-bottom-color: #f7f7f7; font-weight: 700; }
    .docctl { margin-left: auto; display: flex; gap: 13px; align-items: center; padding-right: 15px; }
    .body { flex: 1; min-height: 0; display: flex; }
    .fm { width: 284px; flex: none; background: #f6f6f6; border-right: 1px solid #8d8d8d; display: flex; flex-direction: column; min-height: 0; }
    .grab { height: 16px; margin: 2px 3px 4px 0; border: 1px solid #d0d0d0; border-left: 0; border-right: 0; display: grid; place-items: center; }
    .grab i { width: 6px; height: 6px; border: 1px solid #888; border-radius: 50%; }
    .fmtabs { display: flex; height: 26px; padding-right: 4px; }
    .fmtabs button { width: 40px; display: grid; place-items: center; background: #cfcfcf; border: 1px solid #909090; border-left: 0; }
    .fmtabs button.on { background: #f7f7f7; border-color: transparent #909090 transparent transparent; }
    .fmtabs button.more { margin-left: auto; width: 14px; background: none; border: 0; }
    .filter { margin: 0 3px; height: 32px; border: 1px solid #bdbdbd; display: flex; align-items: center; padding-left: 2px; }
    .filter input { flex: 1; height: 24px; outline: 0; }
    .fmscroll { flex: 1; min-height: 0; display: flex; }
    .tree { flex: 1; overflow: hidden; font-size: 14px; color: #2a2a2a; }
    .tree li { height: 24px; display: flex; align-items: center; gap: 5px; padding-left: 8px; }
    .tree .exp { width: 5px; height: 8px; margin-right: 7px; }
    .vtrack { width: 20px; background: #efefef; display: flex; flex-direction: column; padding: 168px 6px 72px 7px; }
    .vtrack i { flex: 1; width: 6px; background: #868686; }
    .htrack { height: 21px; background: #efefef; padding: 7px 83px 8px 20px; flex: none; }
    .htrack i { display: block; height: 6px; background: #868686; }
    .view { flex: 1; min-width: 0; position: relative; }
    .canvas { position: absolute; inset: 0; width: 100%; height: 100%; }
    .hud { position: relative; display: flex; justify-content: center; align-items: center; gap: 8px; padding-top: 6px; margin-right: 6px; }
    .handle { position: absolute; left: -1px; top: 381px; width: 10px; height: 39px; background: #f7f7f7; border: 1px solid #909090; border-left: 0; display: grid; place-items: center; }
    .handle i { width: 5px; height: 5px; border: 1px solid #999; border-radius: 50%; }
    .ptabs { position: absolute; right: 0; top: 21px; width: 33px; display: flex; flex-direction: column; border: 1px solid #8a8a8a; border-right: 0; background: #cbcbcb; z-index: 1; }
    .ptabs button { height: 30px; display: grid; place-items: center; border-bottom: 1px solid #8a8a8a; }
    .ptabs button:first-child { background: #fafafa; height: 29px; }
    .ptabs button:last-child { border: 0; height: 29px; }
    .iso { position: absolute; left: 11px; bottom: 0; font-family: Lato, sans-serif; font-size: 18px; line-height: 22px; color: #111; }
    .mark { position: absolute; left: 23%; top: 41%; padding-left: 6px; color: rgba(255,255,255,.74); font-size: 60px; line-height: 90px; font-family: "Liberation Mono", monospace; }
    .mark b { font-family: "Noto Sans CJK SC", sans-serif; font-weight: 300; font-size: 72px; }
    .btabs { flex: none; height: 20px; display: flex; background: #fafafa; border-top: 1px solid #868686; font-size: 15px; line-height: 18px; color: #3a3a3a; }
    .btabs button { background: #cfcfcf; border-right: 1px solid #868686; border-bottom: 1px solid #868686; padding: 0 13px; }
    .btabs button.on { background: #f9f9f9; font-weight: 700; color: #111; border-bottom: 0; padding: 0 11px 0 16px; }
    .btabs button.end { padding: 0 24px 0 14px; }
    .nav { display: flex; padding-left: 2px; }
    .btabs .nav button { width: 20px; padding: 0; background: #a9abc6; border: 1px solid #8486a2; border-left-color: #c9cbdd; display: grid; place-items: center; }

    .pane { min-width: 0; min-height: 0; background: #f6f6f6; border-left: 2px solid #b3ad94; display: flex; flex-direction: column; }
    .phead { flex: none; height: 23px; background: #a9a9a9; border-bottom: 1px solid #222; display: flex; align-items: center; padding-left: 7px; gap: 6px; font-size: 14px; font-weight: 700; color: #111; overflow: hidden; }
    .phead h2 { font-size: inherit; line-height: 20px; flex: 1; }
    .pbody { flex: 1; min-height: 0; display: flex; }
    .secs { flex: 1; overflow: hidden; padding: 5px 14px 0 13px; color: #4d4d4d; font-size: 12px; }
    .sec { border-top: 1px solid #808080; padding-bottom: 29px; }
    .sec h3 { font-size: 12px; height: 24px; display: flex; align-items: center; justify-content: space-between; padding: 0 9px 0 4px; color: #3f3f3f; }
    .sec a { display: flex; align-items: center; height: 32px; gap: 5px; padding-left: 1px; line-height: 17px; }
    .sec a.two { height: 38px; white-space: pre-line; }
    .sec a .ic { margin-bottom: 5px; }
    .pv { width: 14px; background: #efefef; padding: 12px 0 18px; display: flex; flex-direction: column; align-items: flex-start; }
    .pv i { width: 14px; background: #cdcdcd; height: 545px; margin: 8px 0 auto; }
    .ph { flex: none; height: 20px; margin-bottom: 1px; display: flex; align-items: center; gap: 7px; background: #f0f0f0; padding: 0 29px 0 16px; }
    .ph i { flex: 1; height: 18px; background: #cdcdcd; }

    .status { flex: none; height: 23px; border-top: 1px solid #868686; border-bottom: 1px solid #b6b9b8; background: #f8f8f8; display: flex; align-items: center; font-size: 14px; padding-left: 1px; }
    .status .msg { flex: 1; }
    .status .cell { border-left: 1px solid #ddd; height: 21px; line-height: 21px; padding-left: 4px; }
    .status .gap { width: 7px; padding: 0; }
    .status .gap.far { width: 16px; }
    .status .edit { width: 87px; }
    .units { display: flex; align-items: center; width: 182px; }
    .status .units { padding-left: 40px; }
    .units select { appearance: none; width: 71px; outline: 0; }

    .task { flex: none; height: 55px; display: grid; grid-template-columns: 1fr auto 1fr; align-items: center; background: linear-gradient(90deg, #d8efe9, #dbeedd 35%, #dbeee1 60%, #e3f2ef); font-size: 14px; line-height: 20px; }
    .weather { display: flex; gap: 6px; padding-left: 24px; }
    .weather .dim { color: #6a7371; }
    .dock { display: flex; align-items: center; height: 55px; padding-top: 3px; }
    .dock > button { width: 55px; height: 50px; display: grid; place-items: center; position: relative; }
    .dock svg { width: 32px; height: 32px; }
    .dock .search { display: flex; align-items: center; width: 273px; height: 40px; margin: 0 4px 0 3px; padding: 0 6px 0 14px; gap: 12px; border-radius: 20px; background: #f5faf8; border: 1px solid #d2dcd8; border-bottom-color: #aab8b2; }
    .search input { flex: 1; min-width: 0; font-size: 16px; outline: 0; }
    .search input::placeholder { color: #5b6060; opacity: 1; }
    .dock .search .mag { width: 20px; height: 20px; }
    .dock .search .art { width: 60px; height: 34px; }
    .dock > button.on { width: 48px; margin-left: 4px; background: #f4faf7; border-radius: 5px; }
    .dock > button.run::after { content: ""; position: absolute; bottom: 1px; width: 6px; height: 4px; border-radius: 2px; background: #848c8a; }
    .dock > button.on::after { width: 19px; background: #1769be; }
    .tray { display: flex; justify-content: flex-end; align-items: center; gap: 20px; padding: 2px 21px 0 0; }
    .tray svg { width: 20px; height: 20px; }
    .clock { text-align: right; }
    .when { display: flex; align-items: center; gap: 9px; padding-left: 4px; }
    .tray .tight { display: flex; gap: 10px; }
    .activate { position: absolute; right: 72px; bottom: 104px; width: 290px; pointer-events: none; color: rgba(110,112,118,.5); font-size: 16px; line-height: 22px; z-index: 3; }
    .activate p:first-child { font-size: 24px; line-height: 36px; }
  `;

  private big([icon, a, b]: Big) {
    return html`<button class="big">${ic(icon)}<span>${a}</span>${b ? html`<span>${b}</span>` : nothing}</button>`;
  }
  private smalls(rows: Small[]) {
    return html`<div class="smalls">${rows.map(([i, t, off]) => html`<button class="small" ?disabled=${!!off}>${ic(i)}${t}</button>`)}</div>`;
  }
  private winIcons(c: string) {
    return html`
      <svg width="12" height="14" viewBox="0 0 12 14"><path d="M1 11.5 H11" stroke=${c} stroke-width="3"/></svg>
      <svg width="14" height="14" viewBox="0 0 14 14"><path d="M4 4 V1.5 H13 V8 H10 M1 4.5 H10 V12 H1 Z" fill="none" stroke=${c} stroke-width="1.4"/></svg>
      <svg width="12" height="12" viewBox="0 0 12 12"><path d="M1 1 L11 11 M11 1 L1 11" stroke=${c} stroke-width="1.5"/></svg>`;
  }

  private titleBar() {
    const q = (i: string, label: string, d = true) => html`<button aria-label=${label}>${ic(i, "l")}</button>${d ? drop() : nothing}`;
    return html`<header class="title">
      <div class="tl">
        <div class="logo">
          <svg viewBox="0 0 28 28"><path d="M8 3 C16 3 17 5 12 9 L8 12 M8 12 C15 11 14 17 8 22 C6 24 3 24 1 24 L8 12" fill="none" stroke="#c8202c" stroke-width="2"/><path d="M27 11 C20 10 17 12 20 15 C24 18 24 22 15 23" fill="none" stroke="#c8202c" stroke-width="2.4"/></svg>
          <span><b>SOLID</b>WORKS</span>
        </div>
        <button class="flyout" aria-label="Expand menu"><svg width="8" height="14" viewBox="0 0 8 14"><path d="M0 0 L8 7 L0 14 Z" fill="#666"/></svg></button>
        <div class="quick">
          ${q("page", "New")}${q("openDoc", "Open")}${q("save", "Save")}${q("print", "Print")}${q("undo", "Undo")}
          <div class="sel"><button aria-label="Select">${ic("cursor", "l")}</button>${drop()}</div>
          <button aria-label="Rebuild">${ic("light")}</button><button aria-label="File properties">${ic("list")}</button>${q("gear", "Options")}
        </div>
      </div>
      <div class="doc">Part1 *</div>
      <div class="tr">
        <label class="find">
          <svg width="15" height="15" viewBox="0 0 15 15"><rect width="15" height="15" fill="#222"/><rect x="1.5" y="1.5" width="12" height="12" fill="none" stroke="#fff"/><path d="M5 3.5 L9 7.5 L5 11.5 M8 11.5 H11" stroke="#fff" fill="none" stroke-width="1.4"/></svg>
          <input type="search" aria-label="Search Commands" placeholder="Search Commands">
          <svg width="24" height="24" viewBox="0 0 24 24"><circle cx="10" cy="10" r="8" fill="none" stroke="#7c7c7c" stroke-width="2.2"/><path d="M16 16 L22 22.5" stroke="#7c7c7c" stroke-width="3.4"/></svg>
          ${drop("dim")}
        </label>
        <div class="winctl"><span>?</span>${drop()}${this.winIcons("#6e6e6e")}</div>
      </div>
    </header>`;
  }

  private ribbon() {
    return html`<section class="ribbon">
      <div class="grp bigs">${BIG_1.map((b) => this.big(b))}</div>
      <div class="grp">${this.smalls([["planar", "Planar Surface"], ["offset", "Offset Surface"], ["ruled", "Ruled Surface"]])}
        <div class="side">${this.big(["flatten", "Surface", "Flatten"])}${this.big(["fillet", "Fillet"])}</div></div>
      <div class="grp">${this.smalls([["delFace", "Delete Face"], ["repFace", "Replace Face"]])}</div>
      <div class="grp">${this.smalls([["extSurf", "Extend Surface", true], ["trimSurf", "Trim Surface", true], ["untrim", "Untrim Surface", true]])}
        <div class="side">${this.big(["knit", "Knit", "Surface"])}</div></div>
      <div class="grp">${this.smalls([["thicken", "Thicken", true], ["thickCut", "Thickened Cut", true], ["cutWith", "Cut With Surface"]])}</div>
      <div class="grp"><div class="side">
        <button class="big up">${ic("refGeo")}<span>Referenc...</span>${drop()}</button>
        <button class="big up">${ic("curves")}<span>Curves</span>${drop()}</button>
      </div></div>
    </section>`;
  }

  private featureTree() {
    return html`<aside class="fm">
      <div class="grab"><i></i></div>
      <div class="fmtabs">
        ${["part", "list", "config", "target", "ballDark"].map((i, n) => html`<button class=${n ? "" : "on"} aria-label=${i}>${ic(i)}</button>`)}
        <button class="more" aria-label="More tabs"><svg width="7" height="11" viewBox="0 0 7 11"><path d="M1 1 L6 5.5 L1 10" fill="none" stroke="#555" stroke-width="1.6"/></svg></button>
      </div>
      <label class="filter">${ic("funnel")}<input type="text" aria-label="Filter"></label>
      <div class="fmscroll">
        <ul class="tree">${TREE.map(([i, t]) => html`<li><svg class="exp" viewBox="0 0 5 8">${i === "boss" || i === "cut" || i === "wrap" ? svg`<path d="M0 0 L5 4 L0 8 Z" fill="#555"/>` : nothing}</svg>${ic(i)}<span>${t}</span></li>`)}</ul>
        <div class="vtrack"><i></i></div>
      </div>
      <div class="htrack"><i></i></div>
    </aside>`;
  }

  private viewport() {
    const d = drop("dim");
    return html`<div class="view">
      <svg class="canvas" viewBox="284 148 1420 830" role="img" aria-label="Part model">${model}</svg>
      <div class="hud">
        ${["fit", "area", "prev", "section", "dims", "cubeView"].map((i) => ic(i))}${d}${ic("display")}${d}${ic("eye")}${d}${ic("editApp")}${ic("scene")}${d}${ic("monitor")}${d}
      </div>
      <div class="mark"><b>莫西网</b>www.3dmox.com</div>
      <div class="handle"><i></i></div>
      <nav class="ptabs">${["home", "books", "folder", "palette", "ball", "list", "chat"].map((i) => html`<button aria-label=${i}>${ic(i)}</button>`)}</nav>
      <div class="iso">*Isometric</div>
    </div>`;
  }

  private pane() {
    return html`<aside class="pane">
      <div class="phead"><svg width="9" height="9" viewBox="0 0 9 9"><path d="M4 0 L1 4 L4 8 M8 0 L5 4 L8 8" fill="none" stroke="#111" stroke-width="1.2"/></svg><h2>SOLIDWORKS Resources</h2>
        <svg width="14" height="16" viewBox="0 0 14 16"><path d="M7 1 L14 7 L11 8 L9 12 L3 6 L7 4 Z M5 9 L0 15" fill="#333" stroke="#333" stroke-width="1.4"/></svg></div>
      <div class="pbody">
        <div class="secs">${SECTIONS.map((s) => html`<section class="sec">
          <h3>${s.title}<svg width="11" height="8" viewBox="0 0 11 8"><path d="M1 7 L5.5 1.5 L10 7" fill="none" stroke="#666" stroke-width="1.6"/></svg></h3>
          ${s.items.map(([i, t]) => {
            const two = t.startsWith("Intro") || t.startsWith("Perf");
            const text = two ? t.replace(/ (\S+)$/, "\n$1") : t;
            return html`<a href="#" class=${classMap({ two })}>${ic(i, "l")}<span>${text}</span></a>`;
          })}
        </section>`)}</div>
        <div class="pv"><svg width="20" height="14" viewBox="0 0 20 14"><path d="M2 12 L10 3 L18 12" fill="none" stroke="#555" stroke-width="3.4"/></svg><i></i><svg width="20" height="14" viewBox="0 0 20 14"><path d="M2 2 L10 11 L18 2" fill="none" stroke="#555" stroke-width="3.4"/></svg></div>
      </div>
      <div class="ph"><svg width="12" height="17" viewBox="0 0 12 17"><path d="M11 1 L3 8.5 L11 16" fill="none" stroke="#555" stroke-width="3.2"/></svg><i></i><svg width="12" height="17" viewBox="0 0 12 17"><path d="M1 1 L9 8.5 L1 16" fill="none" stroke="#555" stroke-width="3.2"/></svg></div>
    </aside>`;
  }

  private taskbar() {
    return html`<footer class="task">
      <div class="weather">
        <svg width="34" height="40" viewBox="0 0 34 40"><path d="M2 26 C5 23 10 27 16 25 C21 24 25 22 29 21 C29 31 24 36 15 36 C8 36 3 33 2 26 Z" fill="#eda43a"/><path d="M3 29 C9 27 18 32 28 28" stroke="#f7cf7d" stroke-width="2" fill="none"/><path d="M6 19 H15 M9 15 H14" stroke="#f0cd8d" stroke-width="2"/><circle cx="24" cy="11" r="10" fill="#bf2a23"/><text x="24" y="16" text-anchor="middle" font-size="13" fill="#fff">1</text></svg>
        <div><div>75°F</div><div class="dim">Haze</div></div>
      </div>
      <div class="dock">
        <button aria-label="Start"><svg viewBox="0 0 32 32"><g fill="#1883d2"><path d="M1.5 1.5 H15.3 V15.3 H1.5 Z" fill="#35a7e6"/><path d="M16.8 1.5 H30.5 V15.3 H16.8 Z" fill="#1f93dc"/><path d="M1.5 16.8 H15.3 V30.5 H1.5 Z"/><path d="M16.8 16.8 H30.5 V30.5 H16.8 Z" fill="#0f74c6"/></g></svg></button>
        <label class="search"><svg class="mag" viewBox="0 0 20 20"><circle cx="8.6" cy="8.4" r="6.8" fill="none" stroke="#222" stroke-width="2"/><path d="M13.4 13.4 L18.6 18.8" stroke="#222" stroke-width="2.4"/></svg><input type="search" aria-label="Search" placeholder="Search">
          <svg class="art" viewBox="0 0 60 34"><path d="M16 18 V34 M16 27 L12 23" stroke="#4c8a4d" stroke-width="2"/><path d="M16 15 L12 2 L18 1 Z M16 15 L4 7 L7 13 Z M16 15 L27 6 L25 13 Z M16 15 L5 22 L10 25 Z M16 15 L29 21 L23 24 Z M16 15 L13 28 L20 27 Z" fill="#b4bcd6" stroke="#8790b0"/><circle cx="16" cy="16" r="4.4" fill="#eec63c"/><path d="M38 13 C44 15 46 24 44 28 C41 33 32 33 29 29 C27 24 32 16 38 13 Z" fill="#2c9a91"/><path d="M38 14 L34 24 L39 31 M38 14 L43 26" stroke="#63c3b8" fill="none"/><path d="M39 9 L45 3 L55 4 L58 11 L50 19 Z" fill="#3c96dd"/><path d="M39 9 L50 10 L55 4 M50 10 L50 19 M45 3 L50 10 L58 11" fill="none" stroke="#a4d6fa"/></svg></label>
        <button aria-label="Task view"><svg viewBox="0 0 32 32"><rect x="2" y="9" width="22" height="21" fill="#2a2a2a"/><rect x="9" y="2" width="22" height="20" fill="#fafafa"/><rect x="9" y="9" width="15" height="13" fill="#b3b5b5"/></svg></button>
        <button aria-label="Chat"><svg viewBox="0 0 32 32"><path d="M16 2 A14 14 0 1 1 8.6 28 L2 30 L3.6 23 A14 14 0 0 1 16 2 Z" fill="#5b57c0"/><rect x="8" y="10" width="11" height="12" rx="2" fill="#fff"/><path d="M20 14 L25 11 V21 L20 18 Z" fill="#fff"/></svg></button>
        <button class="run" aria-label="File Explorer"><svg viewBox="0 0 32 32"><path d="M1 5 Q1 3 3 3 H11 L14 6 H29 Q31 6 31 8 V28 Q31 30 29 30 H3 Q1 30 1 28 Z" fill="#dd9f1c"/><path d="M1 9 H31 V28 Q31 30 29 30 H3 Q1 30 1 28 Z" fill="#fbcf4a"/><path d="M7 22 H25 V30 H7 Z" fill="#1973b9"/><path d="M10 26 H22 V30 H10 Z" fill="#114f86"/></svg></button>
        <button aria-label="Edge"><svg viewBox="0 0 32 32"><path d="M2 16 A14.5 14.5 0 0 1 31 14 C31 21 25 22 20 20 C23 15 18 10 12 11 C6 12 3 15 2 20 Z" fill="#37bfa8"/><path d="M2 18 C4 11 13 9 17 13 C12 13 9 18 12 23 C15 28 23 28 29 23 C26 31 15 33 9 29 C4 26 2 22 2 18 Z" fill="#1a6fc0"/><path d="M14 2 C24 0 31 7 31 14 C31 20 26 21 21 20 C27 14 22 5 14 2 Z" fill="#57d05c" opacity=".75"/><circle cx="8" cy="24" r="6.6" fill="#c9cccd"/><circle cx="8" cy="22" r="2.6" fill="#6c6664"/><path d="M3.6 28 C4 24 12 24 12.4 28 Z" fill="#6c6664"/></svg></button>
        <button aria-label="Store"><svg viewBox="0 0 32 32"><path d="M10 8 V3 H22 V8" fill="none" stroke="#1d8fd2" stroke-width="2"/><path d="M2 7 H30 V26 Q30 31 25 31 H7 Q2 31 2 26 Z" fill="#15498f"/><rect x="10" y="12" width="5.6" height="5.6" fill="#ef5330"/><rect x="16.6" y="12" width="5.6" height="5.6" fill="#7dba28"/><rect x="10" y="18.6" width="5.6" height="5.6" fill="#20a3ea"/><rect x="16.6" y="18.6" width="5.6" height="5.6" fill="#fcb919"/></svg></button>
        <button aria-label="Mail"><svg viewBox="0 0 32 32"><path d="M1 12 L16 2 L31 12 V30 H1 Z" fill="#134e92"/><path d="M1 12 L16 22 L31 12 V30 H1 Z" fill="#2b9be3"/><path d="M1 30 L16 20 L31 30 Z" fill="#1a7fcf"/><path d="M5 12.4 H27 L16 21 Z" fill="#fff"/></svg></button>
        <button aria-label="WhatsApp"><svg viewBox="0 0 32 32" overflow="visible"><path d="M14 4 A12.6 12.6 0 1 1 8 27.6 L1 30 L3 23 A12.6 12.6 0 0 1 14 4 Z" fill="#41b752"/><path d="M9 11 C8 18 14 24 20 23 L21.6 20 L18 18 L16 19.6 C14 18.6 12.6 17 12 15 L13.4 13 L12 9.6 Z" fill="#fff"/><circle cx="25" cy="4" r="10" fill="#1660b4"/><text x="25" y="9" font-size="14" text-anchor="middle" fill="#fff">5</text></svg></button>
        <button class="on run" aria-label="SolidWorks 2016"><svg viewBox="0 0 32 32"><path d="M2 6 L15 1 L30 5 V24 L17 31 L2 26 Z" fill="#c31b20" stroke="#3b0809"/><path d="M17 10 L30 5 V24 L17 31 Z" fill="#7b0f12"/><path d="M2 6 L15 1 L30 5 L17 10 Z" fill="#8a1215"/><text x="4" y="20" font-size="13" font-weight="700" fill="#fff">S</text><text x="14" y="20" font-size="13" font-weight="700" fill="#fff">W</text><text x="11" y="30" font-size="8" font-weight="700" fill="#fff" stroke="#222" stroke-width="2" paint-order="stroke">2016</text></svg></button>
      </div>
      <div class="tray">
        <svg viewBox="0 0 20 20"><path d="M3 13 L10 6.5 L17 13" fill="none" stroke="#222" stroke-width="1.8"/></svg>
        <svg viewBox="0 0 20 20"><path d="M4.4 16 C-.6 15 .4 9 5 9 C6 4 13 3 14.6 8.4 C20 8.6 21 15 16 16 Z" fill="#a9adac" stroke="#333" stroke-width="1.2"/><path d="M2 12 C7 9 10 13 18 13" fill="none" stroke="#e4e6e5" stroke-width="2"/></svg>
        <div class="tight">
          <svg viewBox="0 0 20 20"><path d="M1 8 C6 2.6 14 2.6 19 8 M4 11 C7.4 7.4 12.6 7.4 16 11 M7 14 C9 12.2 11 12.2 13 14" fill="none" stroke="#222" stroke-width="1.6"/><circle cx="10" cy="16.4" r="1.6"/></svg>
          <svg viewBox="0 0 20 20"><path d="M1 7.4 H4.4 L9 3.4 V16.6 L4.4 12.6 H1 Z" fill="none" stroke="#333" stroke-width="1.3"/><path d="M12 7 C13.6 9 13.6 11 12 13" fill="none" stroke="#333" stroke-width="1.2"/><path d="M14.6 5 C17.4 8 17.4 12 14.6 15 M17 3.4 C20.6 7.6 20.6 12.4 17 16.6" fill="none" stroke="#b7c0bd" stroke-width="1.2"/></svg>
          <svg viewBox="0 0 20 20"><rect x="2.6" y="6" width="14.4" height="10" rx="2" fill="none" stroke="#222" stroke-width="1.5"/><rect x="5" y="8.2" width="9.6" height="5.6" fill="#222"/><path d="M18.4 9 V13" stroke="#222" stroke-width="2"/><path d="M5 1 L1 7 H4 L3 11 L7.4 5 H4.6 Z" fill="#222"/></svg>
        </div>
        <div class="when">
          <div class="clock"><div>12:54 AM</div><div>12/3/2023</div></div>
          <svg viewBox="0 0 20 20"><path d="M10 1 C15 1 16 5 16 9 V13 L18 16 H2 L4 13 V9 C4 5 5 1 10 1 Z M7 17.4 H13 C12.6 20 7.4 20 7 17.4 Z" fill="#0b50b4"/></svg>
        </div>
      </div>
    </footer>`;
  }

  render() {
    const nav = ["M9 1 L3 5 L9 9 Z M1 1 V9", "M8 1 L2 5 L8 9 Z", "M2 1 L8 5 L2 9 Z", "M1 1 L7 5 L1 9 Z M9 1 V9"];
    return html`<div class="app">
      ${this.titleBar()}${this.ribbon()}
      <div class="work">
        <div class="main">
          <nav class="tabs">
            ${RIBBON_TABS.map((t) => html`<button class=${classMap({ on: t === this.tab, wide: t.startsWith("SOLID") })} @click=${() => (this.tab = t)}>${t}</button>`)}
            <div class="docctl">
              <svg width="14" height="14" viewBox="0 0 14 14"><rect x="1" y="1" width="12" height="12" fill="none" stroke="#8a8d97" stroke-width="1.3"/><path d="M4 1 V13 M9 4 L6 7 L9 10 Z" stroke="#8a8d97" fill="#8a8d97"/></svg>
              <svg width="14" height="14" viewBox="0 0 14 14"><rect x="1" y="1" width="12" height="12" fill="none" stroke="#8a8d97" stroke-width="1.3"/><path d="M10 1 V13 M5 4 L8 7 L5 10 Z" stroke="#8a8d97" fill="#8a8d97"/></svg>
              ${this.winIcons("#8a8d97")}
            </div>
          </nav>
          <div class="body">${this.featureTree()}${this.viewport()}</div>
          <nav class="btabs">
            <div class="nav">${nav.map((d, i) => html`<button aria-label="Tab scroll ${i + 1}"><svg width="10" height="10" viewBox="0 0 10 10"><path d=${d} fill="#7d80a0" stroke="#7d80a0"/></svg></button>`)}</div>
            <button class="on">Model</button><button>3D Views</button><button class="end">Motion Study 1</button>
          </nav>
        </div>
        ${this.pane()}
      </div>
      <div class="status">
        <span class="msg">Select entities to modify their appearance</span>
        <span class="cell gap"></span><span class="cell edit">Editing Part</span><span class="cell gap far"></span>
        <label class="cell units"><select aria-label="Unit system"><option>MMGS</option></select><svg width="6" height="4" viewBox="0 0 6 4"><path d="M0 4 L3 0 L6 4 Z" fill="#333"/></svg></label>
        <svg width="16" height="16" viewBox="0 0 16 16"><path d="M1 6 L6 1 L16 4 L12 13 L4 11 Z" fill="#ddd" stroke="#444"/><circle cx="8" cy="6" r="2" fill="#fff" stroke="#444"/><path d="M2 9 L11 12" stroke="#444"/></svg>
      </div>
      ${this.taskbar()}
      <div class="activate"><p>Activate Windows</p><p>Go to Settings to activate Windows.</p></div>
    </div>`;
  }
}
